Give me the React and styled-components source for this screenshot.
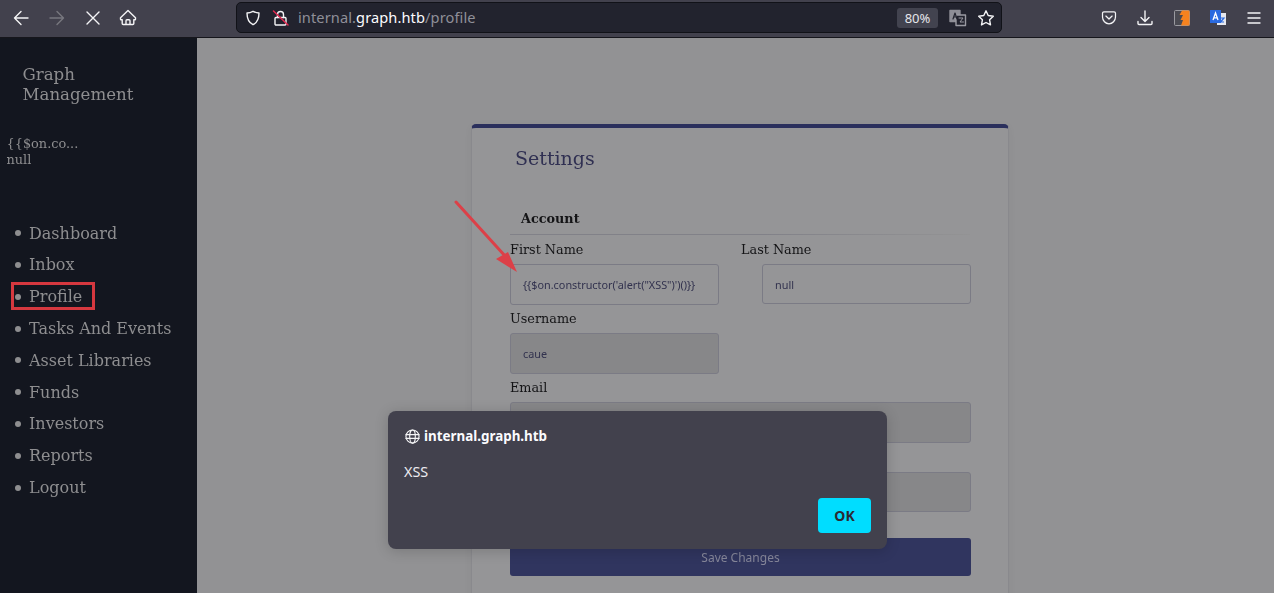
import React from "react";
import styled, { createGlobalStyle } from "styled-components";

const Global = createGlobalStyle`
  html, body { margin: 0; padding: 0; height: 100%; overflow: hidden; background: #929294; }
  * { box-sizing: border-box; }
`;
const uiFont = `"Noto Sans", "Open Sans", sans-serif`;
const serif = `"DejaVu Serif", serif`;

const Page = styled.div`
  position: relative; width: 1274px; height: 593px; overflow: hidden;
  display: flex; flex-direction: column;
`;
const Toolbar = styled.header`
  height: 38px; flex: none; background: #42414d; border-bottom: 1px solid #16161c;
  display: flex; align-items: flex-start; font-family: ${uiFont};
`;
const NavIcons = styled.div`
  width: 236px; flex: none; height: 36px; display: flex; align-items: center;
  padding-left: 12px; gap: 18px;
`;
const IconBox = styled.svg`
  width: ${(p) => p.$w || p.$s || 18}px; height: ${(p) => p.$s || 18}px; flex: none; display: block;
  fill: none; stroke: ${(p) => p.$c || "#f4f4f6"}; stroke-width: 1.4;
  stroke-linecap: round; stroke-linejoin: round;
`;
const UrlBar = styled.div`
  width: 766px; height: 31px; margin-top: 2px; flex: none; background: #22232e;
  border: 1px solid #111218; border-radius: 5px;
  display: flex; align-items: center; padding: 0 6px 0 8px;
`;
const UrlText = styled.div`
  margin-left: 8px; padding-bottom: 2px; font-size: 14.6px; color: #8f8f98; flex: 1; white-space: nowrap;
  letter-spacing: 0.1px;
`;
const UrlHost = styled.span` color: #fbfbfe; `;
const ZoomPill = styled.div`
  width: 41px; height: 20px; border-radius: 3px; background: #42434f; color: #e6e6ea;
  font-size: 13px; display: flex; align-items: center; justify-content: center;
`;
const TrailIcons = styled.div`
  display: flex; align-items: center; gap: 10px; margin-left: 11px;
`;
const RightIcons = styled.div`
  flex: 1; height: 36px; display: flex; align-items: center; padding-left: 99px; gap: 17px;
`;
const Body = styled.div` flex: 1; display: flex; min-height: 0; filter: brightness(0.999); `;
const Sidebar = styled.aside`
  width: 197px; flex: none; background: #13161f; color: #8e8e90; font-family: ${serif};
  padding-top: 27px;
`;
const Brand = styled.div`
  font-size: 16.6px; line-height: 20px; padding-left: 22.5px; width: 160px;
`;
const Profile = styled.div`
  margin-top: 31px; padding-left: 6.5px; font-size: 12.9px; line-height: 16px;
`;
const NavList = styled.ul`
  list-style: none; margin: 49.25px 0 0; padding: 0 0 0 15px;
`;
const NavItem = styled.li`
  height: 31.8px; display: flex; align-items: center; gap: 8px;
  font-size: 16px; white-space: nowrap;
  &::before { content: ""; width: 6px; height: 6px; border-radius: 50%; background: #8e8e90; flex: none; }
`;
const Main = styled.main`
  flex: 1; position: relative; background: #929294; overflow: hidden; padding: 86px 0 0 274px;
`;
const Card = styled.section`
  width: 538px; height: 560px; background: #959597; border: 1px solid #89898d; border-top: 4px solid #2a2f5c;
  border-radius: 5px 5px 0 0; padding: 16px 38px 0 38px;
  box-shadow: 0 2px 8px rgba(0,0,0,.04); font-family: ${serif}; color: #141416;
`;
const Title = styled.h2`
  margin: 0 0 0 5px; font-weight: 400; font-size: 19px; line-height: 28px; color: #303052;
`;
const Section = styled.h3`
  margin: 38px 0 0; padding: 0 0 6px 11px; font-size: 12.8px; line-height: 18px; font-weight: 700;
  border-bottom: 1px solid transparent; border-image: linear-gradient(90deg,#818188 55%,#939394 100%) 1;
`;
const TwoCols = styled.div`
  display: grid; grid-template-columns: 231px 230px;
`;
const Field = styled.div` display: flex; flex-direction: column; `;
const Label = styled.label`
  font-size: 12.8px; line-height: 16px; height: ${(p) => p.$h || 28}px; padding-top: ${(p) => p.$pt || 6}px; white-space: nowrap;
`;
const Input = styled.div`
  height: ${(p) => p.$h || 41}px; width: ${(p) => p.$w || "209px"}; margin-left: ${(p) => p.$ml || 0};
  border: 1px solid #7b7b85; border-radius: 3px; background: ${(p) => p.$off ? "#878789" : "transparent"};
  font-family: ${uiFont}; font-size: 10.85px; color: #32324e; display: flex; align-items: center; padding: 0 12px;
  white-space: nowrap;
`;
const SaveBtn = styled.div`
  margin-top: 26px; height: 38px; width: 461px; background: #30355f; border-radius: 3px;
  font-family: ${uiFont}; font-size: 12px; color: #858699; display: flex; align-items: center; justify-content: center;
`;
const Dialog = styled.div`
  position: absolute; left: 388px; top: 411px; width: 499px; height: 138px; background: #42414d;
  border-radius: 8px; box-shadow: 0 2px 14px rgba(0,0,0,.18); color: #fbfbfe; font-family: ${uiFont};
  padding: 16px;
`;
const DialogHead = styled.div`
  display: flex; align-items: center; gap: 4px; font-size: 13.4px; font-weight: 700; height: 18px; padding-left: 1px;
`;
const DialogText = styled.div` margin-top: 18px; font-size: 14.4px; line-height: 18px; color: #ecebf0; `;
const OkBtn = styled.div`
  position: absolute; right: 16px; bottom: 16px; width: 53px; height: 35px; border-radius: 4px; background: #00ddff;
  color: #2b2a33; font-weight: 700; font-size: 14px; display: flex; align-items: center; justify-content: center;
`;
const Highlight = styled.div`
  position: absolute; left: 11px; top: 282px; width: 84px; height: 28px; border: 3px solid #d6383f;
`;
const ArrowMark = styled.svg`
  position: absolute; left: 450px; top: 195px; width: 75px; height: 85px;
`;

const nav = ["Dashboard","Inbox","Profile","Tasks And Events","Asset Libraries","Funds","Investors","Reports","Logout"];

export default function App() {
  return (
    <Page>
      <Global />
      <Toolbar>
        <NavIcons>
          <IconBox viewBox="0 0 18 18"><path d="M16 9H2.5M9 2.5 2.5 9 9 15.5" /></IconBox>
          <IconBox viewBox="0 0 18 18" $c="#77777f"><path d="M2 9h13.5M9 2.5 15.5 9 9 15.5" /></IconBox>
          <IconBox viewBox="0 0 18 18"><path d="M3 3l12 12M15 3 3 15" /></IconBox>
          <IconBox viewBox="0 0 18 18" style={{ marginLeft: -1 }}><path d="M9 1.5 1.5 8.7v1.6c0 .3.2.5.5.5h1.2v3.7c0 .6.4 1 1 1h9.6c.6 0 1-.4 1-1v-3.7H16c.3 0 .5-.2.5-.5V8.7L9 1.5z M7 15.5v-3.7c0-.6.4-1 1-1h2c.6 0 1 .4 1 1v3.7" /></IconBox>
        </NavIcons>
        <UrlBar>
          <IconBox viewBox="0 0 16 16" $s={16}><path d="M8 1.3c2 1 4 1.6 6 1.7 0 5-1.5 9.5-6 11.7C3.5 12.5 2 8 2 3c2-.1 4-.7 6-1.7z" /></IconBox>
          <IconBox viewBox="0 0 18 18" $s={18} style={{ marginLeft: 11 }}>
            <rect x="3" y="8.5" width="11" height="7.5" rx="1" />
            <path d="M5.5 8.5V5.5a3 3 0 0 1 6 0V8.5" />
            <path d="M1.5 2l14.5 14" stroke="#e22850" strokeWidth="1.5" />
          </IconBox>
          <UrlText>internal.<UrlHost>graph.htb</UrlHost>/profile</UrlText>
          <ZoomPill>80%</ZoomPill>
          <TrailIcons>
            <IconBox viewBox="0 0 18 18" $s={18} $c="#9a9aa2">
              <rect x="1" y="1.5" width="10" height="11" fill="#8e8e96" stroke="#8e8e96" />
              <rect x="7" y="6" width="9.5" height="10.5" fill="#22232e" />
              <path d="M4 10l2-6 2 6M4.8 8h2.4" stroke="#22232e" strokeWidth="1.2" />
              <path d="M10 9h4l-3 4h3.5" strokeWidth="1" />
            </IconBox>
            <IconBox viewBox="0 0 18 18" $s={18}><path d="M9 1.8l2.2 4.7 5.1.7-3.7 3.6.9 5.1L9 13.5 4.500 15.900l.9-5.100L1.700 7.200l5.100-.7L9 1.800z" /></IconBox>
          </TrailIcons>
        </UrlBar>
        <RightIcons>
          <IconBox viewBox="0 0 18 18" $s={16}><path d="M3.3 2h11.4c.9 0 1.600.7 1.600 1.600V8c0 4-3.300 7.500-7.300 7.500S1.700 12 1.700 8V3.600C1.700 2.700 2.400 2 3.300 2z M5.500 6.800 9 10.200l3.500-3.400" /></IconBox>
          <IconBox viewBox="0 0 18 18" $s={18} style={{ marginLeft: 2 }}><path d="M9 2v10M5 8.500 9 12.500l4-4M2 12.500v2c0 .6.400 1 1 1h12c.6 0 1-.4 1-1v-2" /></IconBox>
          <svg width="16" height="16" viewBox="0 0 16 16" style={{ marginLeft: 3 }}>
            <rect x=".5" y=".5" width="15" height="15" rx="1" fill="#4a4a52" stroke="#9a9aa0" />
            <path d="M8 .5h7a.5.5 0 0 1 .5.5v14a.5.5 0 0 1-.5.5H7l2-5.5H6.500L9 5H5.500z" fill="#f5821f" />
          </svg>
          <svg width="18" height="18" viewBox="0 0 18 18" style={{ marginLeft: 2 }}>
            <rect x="8" y="4" width="9" height="12" fill="#e6e8ee" />
            <rect x="1" y="1" width="11" height="13" fill="#2a6ae0" />
            <path d="M4 11l2.500-7 2.500 7M4.800 8.800h3.400" stroke="#fff" strokeWidth="1.3" fill="none" />
            <path d="M11 9h4l-3.500 4H15" stroke="#2a6ae0" strokeWidth="1.2" fill="none" />
          </svg>
          <IconBox viewBox="0 0 14 16" $w={14} $s={16} style={{ marginLeft: 3 }}><path d="M1 3h12M1 8h12M1 13h12" /></IconBox>
        </RightIcons>
      </Toolbar>
      <Body>
        <Sidebar>
          <Brand>Graph Management</Brand>
          <Profile>
            <div>{"{{$on.co..."}</div>
            <div>null</div>
          </Profile>
          <NavList>
            {nav.map((n) => <NavItem key={n}>{n}</NavItem>)}
          </NavList>
        </Sidebar>
        <Main>
          <Card>
            <Title>Settings</Title>
            <Section>Account</Section>
            <TwoCols>
              <Field>
                <Label $h={29} $pt={7}>First Name</Label>
                <Input>{`{{$on.constructor('alert("XSS")')()}}`}</Input>
              </Field>
              <Field>
                <Label $h={29} $pt={7}>Last Name</Label>
                <Input $ml="21px" $h={40}>null</Input>
              </Field>
            </TwoCols>
            <Field>
              <Label>Username</Label>
              <Input $off>caue</Input>
            </Field>
            <Field>
              <Label>Email</Label>
              <Input $off $w="461px" />
            </Field>
            <Field>
              <Label $h={29} />
              <Input $off $w="461px" $h={40} />
            </Field>
            <SaveBtn>Save Changes</SaveBtn>
          </Card>
        </Main>
      </Body>
      <Highlight />
      <ArrowMark viewBox="0 0 75 85">
        <path d="M6 7 56 62" stroke="#dc4048" strokeWidth="3" strokeLinecap="round" />
        <path d="M67 77 46 64 58 57z" fill="#dc4048" />
      </ArrowMark>
      <Dialog>
        <DialogHead>
          <IconBox viewBox="0 0 16 16" $s={15} style={{ strokeWidth: 1.2 }}>
            <circle cx="8" cy="8" r="7" />
            <ellipse cx="8" cy="8" rx="3" ry="7" />
            <path d="M1 6h14M1 10h14" />
          </IconBox>
          internal.graph.htb
        </DialogHead>
        <DialogText>XSS</DialogText>
        <OkBtn>OK</OkBtn>
      </Dialog>
    </Page>
  );
}
